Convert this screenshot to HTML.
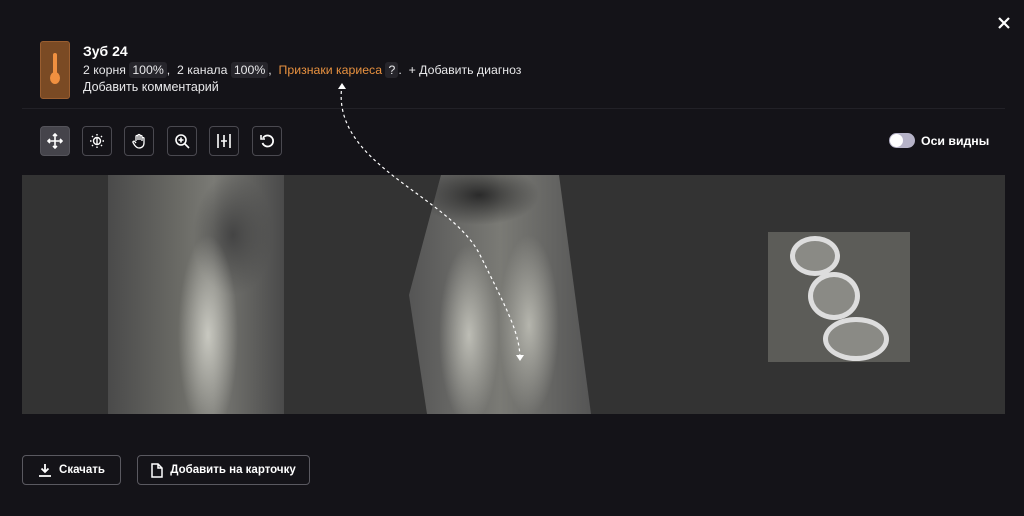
<!DOCTYPE html>
<html><head><meta charset="utf-8"><style>
*{margin:0;padding:0;box-sizing:border-box}
body{width:1024px;height:516px;background:#141318;font-family:"Liberation Sans",sans-serif;color:#e8e8ea;position:relative;overflow:hidden}
.abs{position:absolute}
.tag{background:#26252b;border-radius:3px;padding:1px 3px}
.tb{position:absolute;top:126px;width:30px;height:30px;border:1px solid #4a4950;border-radius:4px;display:flex;align-items:center;justify-content:center}
.btn{position:absolute;top:455px;height:30px;border:1px solid #5a5960;border-radius:4px;display:flex;align-items:center;justify-content:center;gap:7px;font-weight:bold;font-size:11.5px;color:#fff}
</style></head><body>
<svg class="abs" style="right:14px;top:17px" width="12" height="12"><path d="M1 1l10 10M11 1L1 11" stroke="#fff" stroke-width="2.2"/></svg>
<div class="abs" style="left:40px;top:41px;width:30px;height:58px;background:#7a4a24;border:1px solid #9a5e30;border-radius:3px">
 <div class="abs" style="left:12px;top:11px;width:4px;height:22px;background:#f09040;border-radius:2px"></div>
 <div class="abs" style="left:9px;top:30px;width:10px;height:12px;background:#f09040;border-radius:50%"></div>
</div>
<div class="abs" style="left:83px;top:43px;font-size:14px;font-weight:bold;color:#fff">Зуб 24</div>
<div class="abs" style="left:83px;top:62px;font-size:12.3px;line-height:17px;white-space:nowrap">2 корня <span class="tag">100%</span>, &nbsp;2 канала <span class="tag">100%</span>, &nbsp;<span style="color:#e8913f">Признаки кариеса</span> <span class="tag">?</span>. &nbsp;+ Добавить диагноз</div>
<div class="abs" style="left:83px;top:80px;font-size:12.5px">Добавить комментарий</div>
<div class="abs" style="left:22px;top:108px;width:983px;height:1px;background:#222127"></div>
<div class="tb" style="left:40px;background:#45444b;border-color:#55545b"><svg width="16" height="16" viewBox="0 0 16 16" fill="none" stroke="#fff" stroke-width="1.6"><path d="M8 1v14M1 8h14M6 3l2-2 2 2M6 13l2 2 2-2M3 6L1 8l2 2M13 6l2 2-2 2"/></svg></div>
<div class="tb" style="left:82px"><svg width="16" height="16" viewBox="0 0 16 16" fill="none" stroke="#fff" stroke-width="1.4"><circle cx="8" cy="8" r="3.5"/><path d="M8 4.5v7" /><path d="M8 1v1.5M8 13.5V15M1 8h1.5M13.5 8H15M3 3l1 1M12 12l1 1M3 13l1-1M12 4l1-1"/></svg></div>
<div class="tb" style="left:124px"><svg width="16" height="16" viewBox="0 0 16 16" fill="none" stroke="#fff" stroke-width="1.3"><path d="M5 8V3.5a1 1 0 012 0V7M7 7V2.5a1 1 0 012 0V7M9 7V3.5a1 1 0 012 0V8M11 8V5.5a1 1 0 012 0V10c0 3-2 5-5 5-2 0-3-1-4.5-3L2 9.5a1 1 0 011.7-1L5 10"/></svg></div>
<div class="tb" style="left:167px"><svg width="16" height="16" viewBox="0 0 16 16" fill="none" stroke="#fff" stroke-width="1.6"><circle cx="7" cy="7" r="5"/><path d="M11 11l4 4M7 4.5v5M4.5 7h5"/></svg></div>
<div class="tb" style="left:209px"><svg width="16" height="16" viewBox="0 0 16 16" fill="none" stroke="#fff" stroke-width="1.6"><path d="M2 1v14M14 1v14M8 2v12M5 8h6"/></svg></div>
<div class="tb" style="left:252px"><svg width="16" height="16" viewBox="0 0 16 16" fill="none" stroke="#fff" stroke-width="1.8"><path d="M4 5a5.5 5.5 0 11-.5 5"/><path d="M2 2v4h4" stroke-width="1.6"/></svg></div>
<div class="abs" style="left:889px;top:133px;width:26px;height:15px;background:#b6b3c8;border-radius:8px"><div class="abs" style="left:1px;top:1px;width:13px;height:13px;background:#fff;border-radius:50%"></div></div>
<div class="abs" style="left:921px;top:134px;font-size:12.3px;font-weight:bold;color:#fff">Оси видны</div>
<div class="abs" style="left:22px;top:175px;width:983px;height:239px;background:#333333;overflow:hidden">
 <div class="abs" style="left:86px;top:0;width:176px;height:239px;background:radial-gradient(ellipse 30px 100px at 100px 160px,#c8c8c0,transparent),radial-gradient(ellipse 40px 60px at 125px 60px,#444,transparent),linear-gradient(90deg,#4a4a4a 0%,#6a6a65 40%,#7a7a75 60%,#4a4a4a 100%)"></div>
 <div class="abs" style="left:387px;top:0;width:182px;height:239px;clip-path:polygon(32px 0,150px 0,182px 239px,18px 239px,0 120px);background:radial-gradient(ellipse 60px 30px at 70px 20px,#2a2a2a,transparent),radial-gradient(ellipse 30px 90px at 60px 160px,#bdbdb5,transparent),radial-gradient(ellipse 30px 90px at 120px 150px,#b5b5ad,transparent),linear-gradient(90deg,#555,#7a7a75,#555)"></div>
 <div class="abs" style="left:746px;top:57px;width:142px;height:130px;background:#5c5c58">
  <div class="abs" style="left:22px;top:4px;width:50px;height:40px;border:5px solid #ddd;border-radius:50%;background:#8a8a85"></div>
  <div class="abs" style="left:40px;top:40px;width:52px;height:48px;border:5px solid #ddd;border-radius:50%;background:#8a8a85"></div>
  <div class="abs" style="left:55px;top:85px;width:66px;height:44px;border:5px solid #ddd;border-radius:50%;background:#8a8a85"></div>
 </div>
</div>
<svg class="abs" style="left:330px;top:75px" width="210" height="300"><path d="M12 10 C0 90 120 120 150 180 C180 240 190 260 190 285" fill="none" stroke="#fff" stroke-width="1.2" stroke-dasharray="3 3"/><path d="M8 14l4-6 4 6z M186 280l4 6 4-6z" fill="#fff"/></svg>
<div class="btn" style="left:22px;width:99px"><svg width="14" height="14" viewBox="0 0 14 14" fill="none" stroke="#fff" stroke-width="1.8"><path d="M7 1v8M3.5 5.5L7 9l3.5-3.5M1 13h12"/></svg>Скачать</div>
<div class="btn" style="left:137px;width:173px"><svg width="12" height="15" viewBox="0 0 12 15" fill="none" stroke="#fff" stroke-width="1.5"><path d="M1 1h6l4 4v9H1z M7 1v4h4"/></svg>Добавить на карточку</div>
</body></html>
